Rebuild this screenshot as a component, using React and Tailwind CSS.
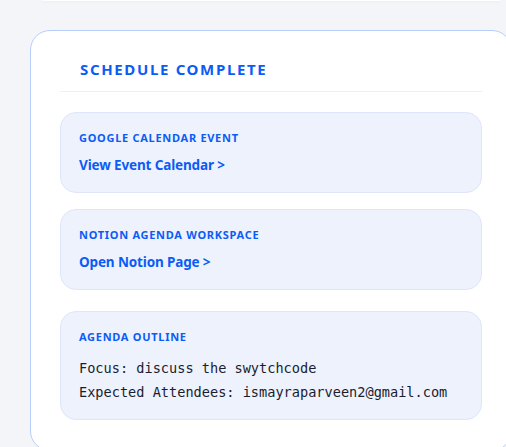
const links = [
  { label: 'Google Calendar Event', text: 'View Event Calendar >' },
  { label: 'Notion Agenda Workspace', text: 'Open Notion Page >' },
]

function Section({ label, children, className = '' }) {
  return (
    <div className={`rounded-2xl border border-[#dfe6fb] bg-[#eef2fd] px-[18px] pt-[19px] ${className}`}>
      <p className="text-[11px] font-bold uppercase tracking-[0.065em] text-[#0b5cf6] leading-none">{label}</p>
      {children}
    </div>
  )
}

export default function App() {
  return (
    <div className="h-[447px] overflow-hidden bg-[#f4f5f9] font-['Noto_Sans',sans-serif]">
      {/* edge of the card above */}
      <div className="mx-[43px] mr-[6px] h-[1px] bg-white shadow-[0_1px_3px_rgba(0,0,0,0.06)]" />

      <div className="ml-[30px] mt-[29px] w-[482px] rounded-[20px] border border-[#b7cefc] bg-white px-[29px] pb-[30px] pt-[31px]">
        <h2 className="pl-[20px] text-[15px] font-bold uppercase tracking-[0.11em] text-[#0b5cf6] leading-none">
          Schedule Complete
        </h2>
        <div className="mt-[14px] h-px bg-[#eef0f4]" />

        <div className="mt-[20px] flex flex-col">
          {links.map((l, i) => (
            <Section key={l.label} label={l.label} className={`h-[81px] ${i > 0 ? 'mt-[16px]' : ''}`}>
              <a href="#" className="mt-[16px] block text-[13.5px] font-bold tracking-[-0.01em] text-[#0b5cf6] leading-none">
                {l.text}
              </a>
            </Section>
          ))}

          <Section label="Agenda Outline" className="mt-[21px] h-[109px]">
            <div className="mt-[14px] font-['DejaVu_Sans_Mono',monospace] text-[13.6px] leading-[24px] text-[#1a1d2e]">
              <p>Focus: discuss the swytchcode</p>
              <p>Expected Attendees: ismayraparveen2@gmail.com</p>
            </div>
          </Section>
        </div>
      </div>
    </div>
  )
}
